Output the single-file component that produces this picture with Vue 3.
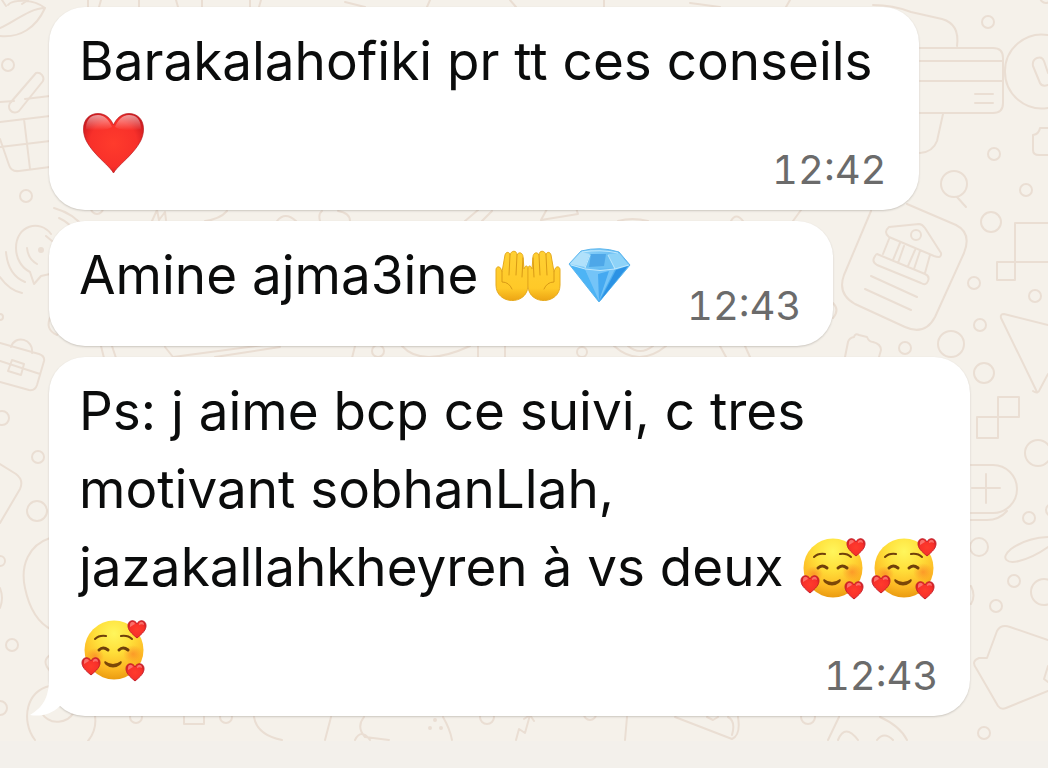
<!-- src/components/ChatThread.vue -->
<template>
  <main class="chat">
    <svg class="wallpaper" viewBox="0 0 1048 741" preserveAspectRatio="xMinYMin slice" aria-hidden="true">
      <!-- dots and rings -->
      <circle v-for="(c, i) in rings" :key="i" :cx="c[0]" :cy="c[1]" :r="c[2]" />

      <!-- left edge -->
      <path d="M0 36C20 38 36 28 45 8C30 8 14 22 0 28M8 5C12 0 32-2 45 8M2 0l4 6M28 0l-6 4" />
      <path d="M36 73L11 102a6 6 0 0 0 8 9L43 81a6 6 0 0 0-7-8Z" />
      <path d="M0 102l14-1M25 99l25-3M0 122l50-6M0 147l50-6M0 139l9 26q2 7 10 6l31-4M24 119l6 50" />
      <path d="M54 208C68 212 78 219 84 228M59 218C68 222 74 228 78 236" />
      <path d="M51 234C40 219 16 225 16 248C16 259 22 268 30 272L34 284L41 276L50 274" />
      <path d="M27 248q1 11 10 16M46 236l6 5M6 252q2 23 19 30M0 277q9 13 22 16" />
      <circle class="dot" cx="41" cy="250" r="2" />
      <path d="M51 316q-7 13 6 19" />
      <path d="M0 343l39 11q6 2 5 7l-7 24q-2 6-8 5L0 382M0 361l40 13M11 347C15 334 34 339 32 353M12 360l12 4-3 11-13-4Z" />
      <path d="M0 464l16 10q8 6 4 15L0 523M50 538C29 545 20 565 25 588C30 612 40 624 52 630M0 588q4 10 0 20" />
      <path d="M50 655q-9 6 0 16M50 686C27 690 20 720 35 740M95 716q2 14-7 25M41 712C50 727 68 723 74 712" />

      <!-- strips that show between the bubbles -->
      <path d="M88 0v7M101 0l-2 7M139 0v7M176 0l2 7M202 0v7M250 0v7M261 0l-2 7M345 2l20 5M430 0l-3 7M510 0l6 7M604 0v7M690 3l30 4M790 0l-4 7" />
      <path d="M152 221l5-11 2 10 6-8 1 8M205 221q15-2 22-10M277 221q8-10 19 0M322 211q-4 3-2 10M338 211q12 2 12 10" />
      <path d="M465 221l13-11M482 221l10-10M541 220l37-6-2-6M541 220l6-11M618 221q14-4 30 0M731 221q5-9 12 0M793 221l8-11" />
      <path d="M101 346l3 12M112 346l4 12M165 347l8 10 90-12M215 357l65-10M355 346l-3 12M402 346q20 22 68 0M478 346v12M505 346v12M614 346q25 22 52 0M628 346q12 10 25 0M720 346l6 11M745 346l5 11" />

      <!-- right edge -->
      <path d="M873 5q20 0 38 7l31 7q18 5 15 27M920 48h73q10 0 10 10v45q0 10-10 10h-73M920 61h82M920 81h82M975 94h18M975 103h18M943 114l-6 27q-4 11-17 12M957 197l9 10" />
      <path d="M1048 35a37 37 0 1 0 0 73M1048 73l-4-12q-2-5-7-3t-4 8l7 17q2 4 8 2M1048 128h-8q-1 6-7 7v15q0 5 6 5h9" />
      <path d="M871 211l-27 64q-7 19 11 29l50 23q20 9 30-10l29-64q8-20-8-28l-49-21" />
      <path d="M889 227l30-3q3 0 6 4l16 25q1 6-7 3l-45-19q-6-5 0-10ZM877 254l48 20q5 2 3 7t-7 2l-44-18q-5-3-3-7t3-4ZM889 239l-6 15M900 243l-7 17M904 246l-6 17M915 250l-7 16M920 251l-6 18M930 255l-5 18M871 276l46 21M865 289l46 21" />
      <path d="M833 303q7 7 0 15M845 357l3-15q1-4 6-5 1-4 5-2l8 2q2 5 6 5 8 2 8 8l-2 7" />
      <path d="M1015 223h33M1015 223v57h-18v-18h51M1033 391q5 4 7-2l8-15M1048 325l-44-11q-4 0-3 4l36 74" />
      <path d="M998 397h21v20h-21ZM977 417h21v21h-21ZM971 465h22a24 24 0 0 1 0 48h-22M971 520h16q12 0 20-9M986 474v29M972 488h28" />
      <path d="M1048 537Q1026 538 1011 549C999 559 1008 564 1019 561Q1034 557 1048 547" />
      <path d="M1048 640l-38-13q-9-3-13 4l-10 27h-8q-8 3-3 10l22 38q3 4 8 2l42-17M1048 666l-4 13 4 3M971 586q5 10 0 18" />

      <!-- bottom edge -->
      <path d="M184 717v7h20v-7M254 717q3 18 28 23M331 717l-6 23M364 717q-8 10 1 20l24 3M355 740q6-12 15 0M443 717q7 12 9 23M516 740l3-11 6 4 5-18M524 719l6-4 4 6M627 717l-2 23M675 717l57 22q9-4 6-22M728 717q8 4 4 18M707 717l6 3 5-3M839 717l-11 23M880 717q20 9 27 23M838 740q7-17 20 0M877 740q7-9 16 0" />
      <circle v-for="x in [430, 435, 441]" :key="x" class="dot" :cx="x" :cy="x === 435 ? 720 : 728" r="1" />
    </svg>

    <ul class="messages">
      <li v-for="(msg, index) in messages" :key="index" class="message">
        <svg v-if="index === messages.length - 1" class="tail" viewBox="0 0 46 38" aria-hidden="true">
          <path d="M20 0C20 20 14 29 1 37C12 39 23 36 31 28L46 20V0Z" />
        </svg>
        <p class="message-content">
          <span v-for="(line, n) in msg.lines" :key="n" :class="['line', { solo: !line.text }]">
            {{ line.text }}
            <svg
              v-for="(icon, k) in line.icons"
              :key="k"
              class="emoji"
              viewBox="0 0 71 72"
              role="img"
              :aria-label="icon"
            >
              <use :href="'#' + icon" />
            </svg>
          </span>
        </p>
        <time class="message-time">{{ msg.time }}</time>
      </li>
    </ul>

    <svg class="defs" aria-hidden="true">
      <defs>
        <radialGradient id="red" cx=".5" cy=".5" r=".6">
          <stop offset="0" stop-color="#ff3b2c" />
          <stop offset=".65" stop-color="#f8302a" />
          <stop offset="1" stop-color="#c9191f" />
        </radialGradient>
        <linearGradient id="shine" x1="0" y1="0" x2="0" y2="1">
          <stop offset="0" stop-color="#fff" stop-opacity=".55" />
          <stop offset="1" stop-color="#fff" stop-opacity="0" />
        </linearGradient>
        <radialGradient id="yellow" cx=".5" cy=".22" r=".8">
          <stop offset="0" stop-color="#fff65c" />
          <stop offset=".4" stop-color="#ffdf3a" />
          <stop offset=".75" stop-color="#fdb924" />
          <stop offset="1" stop-color="#e8980f" />
        </radialGradient>
        <radialGradient id="blush">
          <stop offset="0" stop-color="#fb7a24" stop-opacity=".6" />
          <stop offset="1" stop-color="#fb7a24" stop-opacity="0" />
        </radialGradient>
        <linearGradient id="skin" x1="0" y1="0" x2="0" y2="1">
          <stop offset="0" stop-color="#ffd033" />
          <stop offset=".75" stop-color="#ffc928" />
          <stop offset="1" stop-color="#eda514" />
        </linearGradient>
        <linearGradient id="ice" x1="0" y1="0" x2="1" y2="1">
          <stop offset="0" stop-color="#9fdcfb" />
          <stop offset="1" stop-color="#1c93ea" />
        </linearGradient>

        <g id="small-heart">
          <path fill="url(#red)" stroke="#c5202b" d="M9 18C3 13 0 10 0 5.500C0 0 7-1 9 4C11-1 18 0 18 5.500C18 10 15 13 9 18Z" />
          <path fill="#ff8c86" fill-opacity=".7" d="M2 5C2 1 6 1 7 4C5 5 4 6 2 7ZM11 4C12 1 16 1 16 5C14 4 13 4 11 5Z" />
        </g>

        <g id="heart">
          <path fill="url(#red)" stroke="#b91a1f" stroke-opacity=".7" d="M34.500 64C31 58 23 52 16 44C8 35 4.500 28 4.500 20C4.500 10 11 4.500 19 4.500C27 4.500 32 10 34.500 16C37 10 42 4.500 50 4.500C58 4.500 64.500 10 64.500 20C64.500 28 61 35 53 44C46 52 38 58 34.500 64Z" />
          <path fill="url(#shine)" d="M7 20C7 10 12 6 19 6C26 6 30 11 33 18C27 22 14 22 7 20ZM36 18C39 11 43 6 50 6C57 6 62 10 62 20C55 22 42 22 36 18Z" />
        </g>

        <g id="smiling-face">
          <circle cx="35" cy="35" r="29.500" fill="url(#yellow)" />
          <ellipse cx="16" cy="41" rx="9" ry="8" fill="url(#blush)" />
          <ellipse cx="54" cy="39" rx="10" ry="9" fill="url(#blush)" />
          <g fill="none" stroke="#70400b" stroke-width="2" stroke-linecap="round">
            <path d="M16 24Q20 20 27 21M42 21Q49 20 53 24" />
            <path stroke-width="3" d="M20 35Q24 31 29 35M40 35Q44 31 49 35" />
          </g>
          <path fill="#7c4708" d="M26 46Q34 52 42 46Q44 47 41 50Q34 55 27 50Q24 47 26 46Z" />
          <use href="#small-heart" x="49" y="5" />
          <use href="#small-heart" x="3" y="42" />
          <use href="#small-heart" x="47" y="48" />
        </g>

        <g id="hand">
          <path fill="url(#skin)" stroke="#e6aa1d" d="M2 25C2 21 6 21 7 24L8 27L11 10C12 6 16 7 16 10C17 5 23 5 23 10C25 6 29 8 29 12L30 24C31 20 34 20 34 24L34 41C33 61 2 60 2 40Z" />
          <path fill="none" stroke="#d99a16" stroke-linecap="round" d="M16 10L15 30M23 10L22 30M29 13L28 32M8 27L8 37Q15 37 18 44" />
        </g>
        <g id="palms-up" transform="translate(1 4)">
          <use href="#hand" />
          <use href="#hand" transform="translate(68 0) scale(-1 1)" />
        </g>

        <g id="gem" stroke-linejoin="round">
          <path fill="url(#ice)" stroke="#5cb6ee" d="M5 23L17 10Q36 5 55 11L66 24L35 61Z" />
          <path fill="#b0e1fb" d="M6 23L17 11L26 13L21 26Z" />
          <path fill="#6cc0f3" d="M26 13L44 13L51 28L21 26Z" />
          <path fill="#4ea7e8" d="M27 13L42 13L40 25L25 26Z" />
          <path fill="#8ed3f8" d="M44 13L55 12L65 24L51 28Z" />
          <path fill="#4db4f5" d="M6 24L21 28L35 60Z" />
          <path fill="#74c4f8" d="M21 28Q36 31 51 28L35 60Z" />
          <path fill="#45a9f1" d="M34 33L45 30L35 60Z" />
          <path fill="#2b92e4" d="M52 29L64 25L36 60Z" />
          <path fill="none" stroke="#d5f3ff" stroke-opacity=".8" d="M7 24L21 28Q36 31 51 28L65 24M18 11Q36 8 54 12M21 27L26 14M51 28L44 14" />
        </g>
      </defs>
    </svg>
  </main>
</template>

<script setup>
import { ref } from 'vue'

const messages = ref([
  {
    lines: [{ text: 'Barakalahofiki pr tt ces conseils' }, { icons: ['heart'] }],
    time: '12:42',
  },
  {
    lines: [{ text: 'Amine ajma3ine', icons: ['palms-up', 'gem'] }],
    time: '12:43',
  },
  {
    lines: [
      { text: 'Ps: j aime bcp ce suivi, c tres' },
      { text: 'motivant sobhanLlah,' },
      { text: 'jazakallahkheyren à vs deux', icons: ['smiling-face', 'smiling-face'] },
      { icons: ['smiling-face'] },
    ],
    time: '12:43',
  },
])

// [cx, cy, r]
const rings = [
  [8, 65, 6],
  [26, 196, 6],
  [0, 317, 3],
  [2, 418, 7],
  [38, 457, 6],
  [37, 511, 10],
  [0, 561, 5],
  [12, 645, 6],
  [0, 708, 7],
  [97, 208, 6],
  [136, 717, 6],
  [226, 717, 6],
  [378, 351, 6],
  [487, 717, 7],
  [582, 352, 5],
  [590, 714, 6],
  [808, 717, 7],
  [984, 733, 6],
  [988, 22, 6],
  [1046, -3, 6],
  [994, 154, 6],
  [954, 184, 13],
  [1026, 190, 6],
  [991, 222, 10],
  [916, 235, 5],
  [974, 283, 6],
  [1035, 296, 6],
  [980, 325, 6],
  [905, 348, 6],
  [951, 344, 13],
  [984, 373, 10],
  [1038, 453, 13],
  [1029, 518, 6],
  [1052, 510, 6],
  [979, 547, 9],
  [1014, 581, 6],
  [996, 606, 6],
  [1044, 592, 13],
]
</script>

<style>
body {
  margin: 0;
  background-color: #f3f0eb;
}
</style>

<style scoped>
.chat {
  position: relative;
  box-sizing: border-box;
  min-height: 100vh;
  padding: 7px 49px 51px;
  overflow: hidden;
  color: #0b0c0c;
  font-family: Inter, 'Liberation Sans', sans-serif;
}

.wallpaper {
  position: absolute;
  top: 0;
  left: 0;
  width: 100%;
  height: calc(100% - 27px);
  background-color: #f5f1ea;
  fill: none;
  stroke: #eaded3;
  stroke-width: 2;
  stroke-linecap: round;
  stroke-linejoin: round;
}

.wallpaper .dot {
  fill: #eaded3;
}

.messages {
  position: relative;
  display: flex;
  flex-direction: column;
  align-items: flex-start;
  gap: 11px;
  margin: 0;
  padding: 0;
  list-style: none;
}

.message {
  position: relative;
  display: grid;
  box-sizing: border-box;
  padding: 15px 30px 32px;
  background-color: #fff;
  border-radius: 36px;
  box-shadow: 0 1px 2px rgba(60, 50, 40, 0.22);
}

.tail {
  position: absolute;
  bottom: 0;
  left: -20px;
  width: 46px;
  height: 38px;
  fill: #fff;
}

.message-content {
  grid-area: 1 / 1;
  margin: 0;
  font-size: 53px;
  line-height: 78px;
}

.line {
  display: block;
  height: 78px;
  white-space: nowrap;
}

.line:first-child {
  padding-right: 16px;
}

/* a single line shares its row with the time */
.line:only-child {
  padding-right: 168px;
}

.message-time {
  grid-area: 1 / 1;
  align-self: end;
  justify-self: end;
  margin: 0 2px -16px 0;
  color: #6b6b6b;
  font-size: 40px;
  font-variant-numeric: tabular-nums;
  line-height: 48px;
}

.emoji {
  width: 71px;
  height: 72px;
  vertical-align: -19px;
}

.solo .emoji {
  vertical-align: -23px;
}

.defs {
  position: absolute;
  width: 0;
  height: 0;
}
</style>
